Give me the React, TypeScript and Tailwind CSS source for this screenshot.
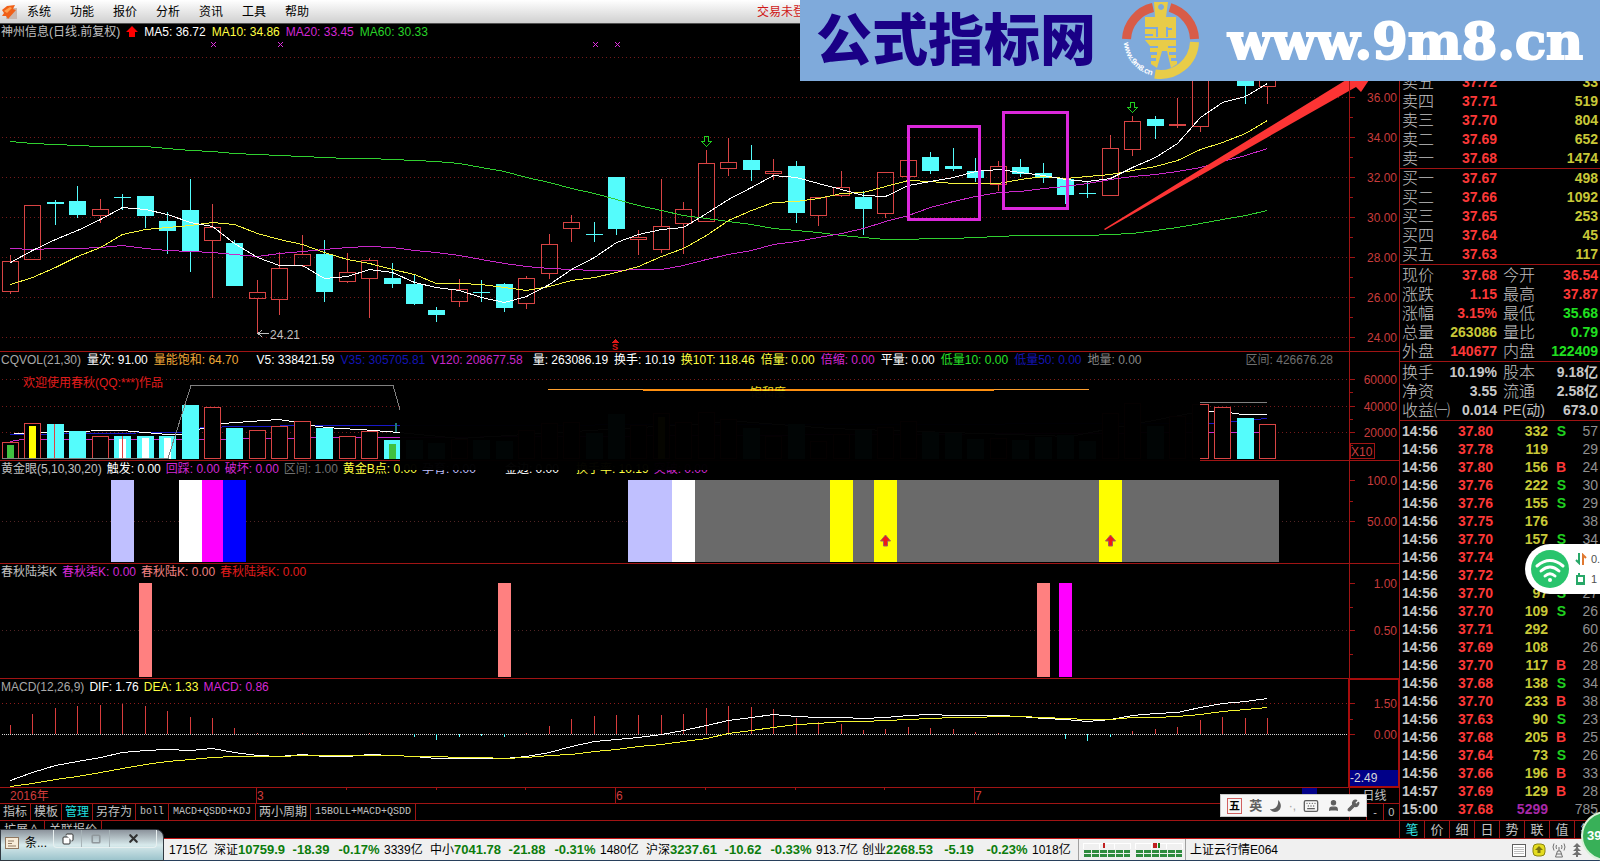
import { Fragment, type ReactNode } from "react"
import { Copy, Keyboard, Moon, Square, User, Wrench, X } from "lucide-react"

const CYAN = "#54fcfc"
const RED = "#d84444"
const LINE = "#a01414"
const W = 1349

// x of the n-th trading day
const dayX = (i: number) => Math.floor(10.5 + i * 22.446) + 0.5

// high, low, body top, body bottom, 1 = up
type Candle = [number, number, number, number, 0 | 1]

const candles: Candle[] = [
  [255, 293, 261, 291, 1], [205, 259, 205, 259, 1], [200, 225, 202, 204, 0], [186, 218, 201, 215, 0],
  [199, 222, 209, 215, 1], [194, 210, 197, 198, 0], [196, 228, 196, 216, 0], [212, 254, 221, 231, 0],
  [179, 272, 210, 251, 0], [204, 297, 227, 240, 1], [240, 286, 243, 286, 0], [280, 333, 292, 298, 1],
  [252, 314, 268, 299, 1], [235, 266, 254, 265, 1], [240, 302, 254, 292, 0], [253, 282, 272, 281, 1],
  [258, 317, 260, 278, 1], [263, 288, 278, 284, 0], [274, 305, 284, 304, 0], [307, 322, 310, 315, 0],
  [279, 306, 289, 301, 1], [280, 302, 292, 293, 0], [283, 312, 284, 308, 0], [276, 308, 278, 303, 1],
  [234, 278, 244, 273, 1], [215, 241, 222, 228, 1], [222, 242, 234, 235, 0], [177, 235, 177, 229, 0],
  [230, 254, 237, 239, 1], [179, 252, 226, 249, 1], [202, 253, 209, 223, 1], [150, 221, 163, 221, 1],
  [138, 175, 162, 168, 1], [145, 181, 160, 170, 0], [159, 179, 171, 173, 1], [161, 223, 166, 213, 0],
  [197, 225, 197, 215, 1], [171, 196, 187, 195, 1], [191, 235, 197, 209, 0], [172, 217, 172, 213, 1],
  [160, 177, 160, 176, 1], [152, 174, 157, 171, 0], [148, 171, 166, 169, 0], [158, 182, 171, 178, 0],
  [161, 190, 166, 184, 1], [159, 177, 167, 174, 0], [163, 183, 173, 178, 0], [179, 204, 179, 195, 0],
  [181, 198, 193, 194, 0], [135, 195, 148, 195, 1], [116, 155, 121, 149, 1], [116, 139, 119, 126, 0],
  [98, 127, 124, 125, 1], [60, 131, 70, 126, 1], [60, 80, 70, 78, 0], [70, 104, 75, 86, 0],
  [50, 103, 60, 86, 1],
]

const ma5 = [
  262, 250, 239, 230, 219, 207, 209, 214, 222, 226, 243, 257, 265, 265, 278, 276, 269, 272, 282, 287,
  290, 297, 302, 296, 284, 269, 257, 242, 234, 229, 227, 213, 199, 187, 175, 177, 183, 189, 195, 196,
  185, 181, 177, 171, 169, 172, 175, 179, 181, 178, 167, 157, 143, 117, 102, 96, 83,
]
const ma10 = [
  284, 277, 267, 256, 247, 234, 229, 227, 225, 222, 224, 233, 239, 244, 252, 259, 263, 269, 274, 283,
  283, 284, 287, 290, 286, 280, 277, 272, 266, 256, 248, 235, 220, 210, 202, 201, 198, 193, 192, 186,
  180, 181, 183, 183, 183, 179, 176, 178, 176, 174, 170, 166, 160, 149, 142, 133, 120,
]
const ma20 = [
  248, 249, 248, 248, 247, 245, 248, 250, 251, 252, 254, 256, 253, 251, 249, 247, 246, 247, 250, 252,
  255, 259, 263, 266, 268, 269, 270, 270, 269, 269, 265, 259, 254, 250, 244, 241, 237, 233, 228, 221,
  215, 207, 201, 196, 192, 191, 188, 186, 183, 179, 176, 174, 171, 167, 161, 155, 148,
]
const ma60 = [
  141, 143, 144, 145, 146, 146, 146, 148, 150, 151, 153, 154, 155, 156, 157, 158, 158, 159, 160, 161,
  163, 167, 171, 177, 182, 188, 193, 199, 205, 210, 215, 218, 221, 224, 228, 230, 232, 235, 237, 239,
  239, 238, 238, 237, 236, 235, 235, 235, 235, 234, 233, 230, 227, 223, 219, 215, 210,
]
const dif = [
  780, 772, 765, 761, 757, 752, 750, 749, 750, 748, 752, 755, 756, 754, 756, 756, 754, 755, 756, 758,
  758, 758, 758, 756, 752, 746, 741, 739, 737, 734, 730, 725, 720, 717, 714, 716, 717, 717, 718, 717,
  715, 714, 715, 715, 715, 716, 718, 719, 721, 719, 715, 713, 712, 707, 703, 701, 698,
]
const dea = [
  786, 783, 779, 776, 772, 768, 764, 761, 759, 757, 756, 756, 756, 755, 755, 755, 755, 755, 756, 756,
  757, 757, 758, 757, 755, 754, 751, 749, 746, 744, 741, 738, 733, 730, 727, 724, 723, 721, 721, 720,
  719, 718, 717, 717, 716, 716, 717, 718, 719, 719, 717, 717, 716, 714, 711, 709, 707,
]
const macd = [
  725, 714, 708, 706, 705, 704, 706, 711, 717, 718, 728, 733, 734, 733, 734, 734, 733, 734, 737, 740,
  737, 736, 737, 733, 726, 719, 716, 715, 715, 715, 714, 708, 706, 707, 709, 718, 722, 724, 730, 729,
  727, 728, 729, 732, 733, 734, 734, 739, 741, 737, 731, 729, 727, 720, 717, 718, 718,
]

// top, 1 = up, optional inner bar colour and top
type VolumeBar = [number, 0 | 1, string?, number?]

const volumes: VolumeBar[] = [
  [442, 1, "#40c040", 445], [423, 1, "#ffff00", 426], [424, 0], [431, 0], [436, 1], [436, 0, "#fff", 439],
  [436, 0, "#fff", 438], [436, 0, "#fff", 438], [405, 0], [407, 1], [428, 0], [430, 1], [426, 1],
  [421, 1], [428, 0], [436, 1], [431, 1], [440, 0, "#40c040", 444], [440, 0], [443, 0], [439, 1],
  [440, 0], [441, 0], [430, 1], [423, 1], [422, 1], [433, 0], [414, 0], [425, 1], [413, 1, "#ffff00", 417],
  [422, 1], [412, 1], [419, 1], [428, 0], [436, 1], [424, 0], [441, 1], [434, 1], [430, 0], [427, 1],
  [421, 1], [432, 0], [433, 0], [439, 0], [438, 1], [440, 0], [437, 0], [435, 0], [441, 0], [413, 1],
  [403, 1], [426, 0], [416, 1], [404, 1], [407, 1], [418, 0], [424, 1],
]

const goldBars: [number, number, string][] = [
  [111, 23, "#c0c0ff"], [179, 23, "#fff"], [202, 21, "#ff00ff"], [223, 23, "#0000ff"],
  [628, 44, "#c0c0ff"], [672, 23, "#fff"], [695, 584, "#6a6a6a"],
  [830, 23, "#ffff00"], [874, 23, "#ffff00"], [1099, 23, "#ffff00"],
]

const points = (ys: number[]) => ys.map((y, i) => `${dayX(i)},${y + 0.5}`).join(" ")

function Curve({ ys, color }: { ys: number[]; color: string }) {
  return <polyline points={points(ys)} fill="none" stroke={color} />
}

function DotRow({ y, color = "#741a1a", dash = "1 3" }: { y: number; color?: string; dash?: string }) {
  return <line x1={2} x2={W} y1={y + 0.5} y2={y + 0.5} stroke={color} strokeDasharray={dash} />
}

interface PanelProps {
  top: number
  height: number
  className: string
  gap?: string
  title: ReactNode
  labels: [number, string][]
  ticks: number[]
  axisClass?: string
  axisExtra?: ReactNode
  children: ReactNode
}

function Panel({
  top, height, className, gap = "gap-[5px]", title, labels, ticks, axisClass = "", axisExtra, children,
}: PanelProps) {
  return (
    <section className={`flex border-b border-[#a01414] ${className}`}>
      <div className="grid min-w-0 flex-1">
        <div className={`col-start-1 row-start-1 flex h-4 items-center overflow-hidden pl-px whitespace-nowrap ${gap}`}>
          {title}
        </div>
        <svg
          className="col-start-1 row-start-1 h-full w-full overflow-visible"
          viewBox={`0 ${top} ${W} ${height}`}
          preserveAspectRatio="none"
          shapeRendering="crispEdges"
        >
          {children}
        </svg>
      </div>
      <div className={`w-[50px] border-l border-[#a01414] ${axisClass}`}>
        <svg className="block h-full w-full" viewBox={`0 ${top} 49 ${height}`} shapeRendering="crispEdges">
          {ticks.map((y, i) => (
            <line key={y} x1={0} x2={i % 2 ? 3 : 5} y1={y + 0.5} y2={y + 0.5} stroke={LINE} />
          ))}
          {labels.map(([y, text]) => (
            <text key={y} x={47} y={y + 5} textAnchor="end" fontSize={12} fill="#c83c3c">
              {text}
            </text>
          ))}
          {axisExtra}
        </svg>
      </div>
    </section>
  )
}

function DownArrow({ x, y }: { x: number; y: number }) {
  return (
    <path
      d={`M${x - 2} ${y}h4v5h3l-5 5l-5-5h3z`}
      fill="none"
      stroke="#20d020"
    />
  )
}

function PricePanel() {
  return (
    <Panel
      top={24}
      height={327}
      className="h-[328px]"
      gap="gap-1.5"
      title={
        <>
          <span className="text-[#c0c0c0]">神州信息(日线.前复权)</span>
          <svg className="h-3 w-3" viewBox="0 0 12 12">
            <path d="M6 0l6 6H9v5H3V6H0z" fill="#ff0000" />
          </svg>
          <span className="text-white">MA5: 36.72</span>
          <span className="text-[#ffff40]">MA10: 34.86</span>
          <span className="text-[#d428d4]">MA20: 33.45</span>
          <span className="text-[#28d428]">MA60: 30.33</span>
        </>
      }
      ticks={[57, 77, 97, 117, 137, 157, 177, 197, 217, 237, 257, 277, 297, 317, 337]}
      labels={[
        [97, "36.00"],
        [137, "34.00"],
        [177, "32.00"],
        [217, "30.00"],
        [257, "28.00"],
        [297, "26.00"],
        [337, "24.00"],
      ]}
    >
      {[57, 97, 137, 177, 217, 257, 297, 337].map((y) => (
        <DotRow key={y} y={y} />
      ))}
      {candles.map(([high, low, top, bottom, up], i) => {
        const x = dayX(i)
        return up ? (
          <g key={i} stroke={RED} fill="none">
            <path d={`M${x} ${high}V${top}M${x} ${bottom + 1}V${low + 1}`} />
            <rect x={x - 8} y={top + 0.5} width={16} height={bottom - top} />
          </g>
        ) : (
          <g key={i} fill={CYAN}>
            <rect x={x - 0.5} y={high} width={1} height={low - high} />
            <rect x={x - 8.5} y={top} width={17} height={bottom - top} />
          </g>
        )
      })}
      <Curve ys={ma60} color="#30d030" />
      <Curve ys={ma20} color="#c828c8" />
      <Curve ys={ma10} color="#f4f440" />
      <Curve ys={ma5} color="#ffffff" />
      <DownArrow x={706.5} y={136.5} />
      <DownArrow x={1132.5} y={102.5} />
      {[213, 280, 595, 617].map((x) => (
        <path key={x} d={`M${x - 2} 42l5 5M${x + 3} 42l-5 5`} stroke="#e030e0" />
      ))}
      <path d="M269 333.5h-11M262 330l-4 3.5l4 3.5" fill="none" stroke="#c0c0c0" />
      <text x={270} y={339} fontSize={12} fill="#c0c0c0">24.21</text>
      <path d="M615 339l4 4h-8z" fill="#e01818" />
      <text x={612} y={350} fontSize={9} fontWeight={700} fill="#e01818">S</text>
      <g fill="none" stroke="#dc28dc" strokeWidth={3}>
        <rect x={908.5} y={126.5} width={71} height={93} />
        <rect x={1003.5} y={112.5} width={64} height={96} />
      </g>
      <path
        d="M1104 229L1180 182L1346 80L1369 80L1361 92L1356 87L1180 187L1105 230z"
        fill="#fc3434"
        shapeRendering="auto"
      />
    </Panel>
  )
}

function VolumePanel() {
  return (
    <Panel
      top={352}
      height={108}
      className="h-[109px]"
      gap="gap-1.5"
      title={
        <>
          <span className="text-[#a8a8a8]">CQVOL(21,30)</span>
          <span className="text-white">量次: 91.00</span>
          <span className="text-[#f0a838]">量能饱和: 64.70</span>
          <span className="ml-3 text-white">V5: 338421.59</span>
          <span className="text-[#1414b4]">V35: 305705.81</span>
          <span className="text-[#c828c8]">V120: 208677.58</span>
          <span className="ml-1 text-white">量: 263086.19</span>
          <span className="text-white">换手: 10.19</span>
          <span className="text-[#ffff40]">换10T: 118.46</span>
          <span className="text-[#ffff40]">倍量: 0.00</span>
          <span className="text-[#d428d4]">倍缩: 0.00</span>
          <span className="text-white">平量: 0.00</span>
          <span className="text-[#28e028]">低量10: 0.00</span>
          <span className="text-[#1414b4]">低量50: 0.00</span>
          <span className="text-[#888888]">地量: 0.00</span>
          <span className="mr-4 ml-auto text-[#707070]">区间: 426676.28</span>
        </>
      }
      ticks={[379, 392, 406, 419, 432, 445]}
      labels={[
        [379, "60000"],
        [406, "40000"],
        [432, "20000"],
      ]}
      axisExtra={
        <>
          <rect x={0.5} y={443.5} width={24} height={15} fill="none" stroke={LINE} />
          <text x={1} y={456} fontSize={12} fill="#c83c3c">X10</text>
        </>
      }
    >
      <DotRow y={379} />
      <DotRow y={406} />
      <DotRow y={432} />
      <text x={23} y={387} fontSize={12} fill="#e01c1c">欢迎使用春秋(QQ:***)作品</text>
      <g fill="none">
        <path d="M10 434.5L180 432.5L202 427.5L243 426.5L317 425.5H395L1209 423.5L1245 420.5L1267 418.5" stroke="#1818c8" />
        <path d="M10 441.5L22 439.5H200L337 437.5H400L1209 432.5H1267" stroke="#c828c8" />
        <path d="M14 433.5L60 431.5L122 430.5L168 434.5L186 434.5L200 429L222 423.5L278 419.5L293 421.5L317 426.5L340 428.5L360 429.5L399 432.5L460 438.5L590 430.5L740 421.5L830 428.5L1070 436.5L1200 411.5H1222L1242 414.5H1267" stroke="#ffffff" />
      </g>
      {volumes.map(([top, up, inner, innerTop], i) => {
        const x = dayX(i)
        return (
          <Fragment key={i}>
            <rect
              x={up ? x - 8 : x - 8.5}
              y={up ? top + 0.5 : top}
              width={up ? 16 : 17}
              height={(up ? 458 : 459) - top}
              fill={up ? "#000" : CYAN}
              stroke={up ? RED : "none"}
            />
            {inner && <rect x={x - 3.5} y={innerTop} width={7} height={459 - (innerTop ?? 0)} fill={inner} />}
          </Fragment>
        )
      })}
      <path d="M54.5 424V459M122.5 436V459" stroke="#e04040" />
      <path d="M2 458.5H168L191 385.5H393L400 409.5M1200 402.5H1267" fill="none" stroke="#808080" />
      <path d="M395.5 423V432" stroke="#207878" strokeWidth={2} />
      <path d="M548 389.5H1089" stroke="#ffa030" />
      <path d="M643 390H994" stroke="#ff9010" strokeWidth={2} />
      <text x={750} y={397} fontSize={12} fill="#f4e020">饱和度</text>
    </Panel>
  )
}

function GoldPanel() {
  return (
    <Panel
      top={461}
      height={102}
      className="h-[103px]"
      title={
        <>
          <span className="text-[#c0c0c0]">黄金眼(5,10,30,20)</span>
          <span className="text-white">触发: 0.00</span>
          <span className="text-[#d428d4]">回踩: 0.00</span>
          <span className="text-[#d428d4]">破坏: 0.00</span>
          <span className="text-[#707070]">区间: 1.00</span>
          <span className="text-[#ffff40]">黄金B点: 0.00</span>
          <span className="text-[#c0c0ff]">孕育: 0.00</span>
          <span className="ml-6 text-white">金边: 0.00</span>
          <span className="ml-3 text-[#ffff40]">换手率: 10.19</span>
          <span className="text-[#d428d4]">突破: 0.00</span>
        </>
      }
      ticks={[480, 501, 521]}
      labels={[
        [480, "100.0"],
        [521, "50.00"],
      ]}
    >
      <DotRow y={521} color="#502424" />
      {goldBars.map(([x, width, fill]) => (
        <rect key={x} x={x} y={480} width={width} height={82} fill={fill} />
      ))}
      {[885.5, 1110.5].map((x) => (
        <path
          key={x}
          d={`M${x} 535l5 6h-3v5h-4v-5h-3z`}
          fill="#f01818"
          stroke="#a06060"
          shapeRendering="auto"
        />
      ))}
    </Panel>
  )
}

function SignalPanel() {
  return (
    <Panel
      top={564}
      height={114}
      className="h-[115px]"
      title={
        <>
          <span className="text-[#c0c0c0]">春秋陆柒K</span>
          <span className="text-[#d428d4]">春秋柒K: 0.00</span>
          <span className="text-[#f08080]">春秋陆K: 0.00</span>
          <span className="text-[#e01c1c]">春秋陆柒K: 0.00</span>
        </>
      }
      ticks={[583, 607, 630, 654]}
      labels={[
        [583, "1.00"],
        [630, "0.50"],
      ]}
    >
      <DotRow y={630} color="#502424" />
      <g fill="#ff8080">
        <rect x={139} y={583} width={13} height={94} />
        <rect x={498} y={583} width={13} height={94} />
        <rect x={1037} y={583} width={13} height={94} />
      </g>
      <rect x={1059} y={583} width={13} height={94} fill="#ff00ff" />
    </Panel>
  )
}

function MacdPanel() {
  return (
    <Panel
      top={679}
      height={108}
      className="h-[109px]"
      axisClass="outline-2 -outline-offset-1 outline-[#a80c0c]"
      title={
        <>
          <span className="text-[#a8a8a8]">MACD(12,26,9)</span>
          <span className="text-white">DIF: 1.76</span>
          <span className="text-[#ffff40]">DEA: 1.33</span>
          <span className="text-[#d428d4]">MACD: 0.86</span>
        </>
      }
      ticks={[703, 719, 734]}
      labels={[
        [703, "1.50"],
        [734, "0.00"],
      ]}
      axisExtra={
        <>
          <rect x={0} y={770} width={48} height={16} fill="#000088" />
          <text x={0} y={782} fontSize={12} fill="#d8d8d8">-2.49</text>
        </>
      }
    >
      <DotRow y={703} color="#8c1c1c" />
      <DotRow y={734} color="#d8d8d8" dash="1 1" />
      {macd.map((y, i) => (
        <line key={i} x1={dayX(i)} x2={dayX(i)} y1={734} y2={y} stroke={y > 734 ? CYAN : "#d83c3c"} />
      ))}
      <Curve ys={dif} color="#ffffff" />
      <Curve ys={dea} color="#f4f430" />
    </Panel>
  )
}

const templates = ["指标", "模板", "管理", "另存为", "boll", "MACD+QSDD+KDJ", "两小周期", "15BOLL+MACD+QSDD"]

function ChartFooter() {
  return (
    <>
      <div className="flex h-4 border-b border-[#a01414]">
        <svg className="h-full min-w-0 flex-1" viewBox={`0 788 ${W} 15`} preserveAspectRatio="none" shapeRendering="crispEdges">
          <path
            d="M256.5 788V803M615.5 788V803M974.5 788V803M346.5 788v2M436.5 788v2M525.5 788v2M705.5 788v2M795.5 788v2M884.5 788v2"
            stroke={LINE}
          />
          <g fontSize={12} fill="#d03c3c">
            <text x={10} y={800}>2016年</text>
            <text x={257} y={800}>3</text>
            <text x={616} y={800}>6</text>
            <text x={975} y={800}>7</text>
          </g>
          <rect x={1302} y={788} width={15} height={8} fill="#000088" />
        </svg>
        <div className="w-[50px] border-l border-[#a01414] text-center leading-4 text-[#c0c0c0]">日线</div>
      </div>
      <div className="flex h-[17px] border-b border-[#a01414]">
        <div className="flex flex-1">
          {templates.map((name) => (
            <button
              key={name}
              className={`border-r border-[#a01414] leading-4 ${
                name === "管理" ? "text-[#20e0e0]" : "text-[#c0c0c0]"
              } ${/^[\x00-\x7f]+$/.test(name) ? "px-1 font-[Liberation_Mono,monospace] text-[10px]" : "px-[3px]"}`}
            >
              {name}
            </button>
          ))}
        </div>
        <div className="grid w-[50px] grid-cols-3 border-l border-[#a01414] text-center text-[11px] leading-4 text-[#c0c0c0]">
          <button>+</button>
          <button className="border-l border-[#a01414]">-</button>
          <button className="border-l border-[#a01414]">0</button>
        </div>
      </div>
      <div className="flex h-[18px] border-b border-[#c01414] text-[#c0c0c0]">
        <button className="border-r border-[#a01414] px-1 leading-4">扩展∧</button>
        <button className="border-r border-[#a01414] px-1 leading-4">关联报价</button>
      </div>
    </>
  )
}

const asks = [
  ["卖五", "37.72", "33"],
  ["卖四", "37.71", "519"],
  ["卖三", "37.70", "804"],
  ["卖二", "37.69", "652"],
  ["卖一", "37.68", "1474"],
]
const bids = [
  ["买一", "37.67", "498"],
  ["买二", "37.66", "1092"],
  ["买三", "37.65", "253"],
  ["买四", "37.64", "45"],
  ["买五", "37.63", "117"],
]

const R = "text-[#fc3838]"
const G = "text-[#20e020]"
const Y = "text-[#c8c838]"
const N = "text-[#c8c8c8]"

const quotes = [
  ["现价", "37.68", R, "今开", "36.54", R],
  ["涨跌", "1.15", R, "最高", "37.87", R],
  ["涨幅", "3.15%", R, "最低", "35.68", G],
  ["总量", "263086", Y, "量比", "0.79", G],
  ["外盘", "140677", R, "内盘", "122409", G],
]
const basics = [
  ["换手", "10.19%", N, "股本", "9.18亿", N],
  ["净资", "3.55", N, "流通", "2.58亿", N],
  ["收益㈠", "0.014", N, "PE(动)", "673.0", N],
]

const trades = [
  ["14:56", "37.80", "332", "S", "57"],
  ["14:56", "37.78", "119", "", "29"],
  ["14:56", "37.80", "156", "B", "24"],
  ["14:56", "37.76", "222", "S", "30"],
  ["14:56", "37.76", "155", "S", "29"],
  ["14:56", "37.75", "176", "", "38"],
  ["14:56", "37.70", "157", "S", "34"],
  ["14:56", "37.74", "", "", ""],
  ["14:56", "37.72", "", "", ""],
  ["14:56", "37.70", "97", "S", "27"],
  ["14:56", "37.70", "109", "S", "26"],
  ["14:56", "37.71", "292", "", "60"],
  ["14:56", "37.69", "108", "", "26"],
  ["14:56", "37.70", "117", "B", "28"],
  ["14:56", "37.68", "138", "S", "34"],
  ["14:56", "37.70", "233", "B", "38"],
  ["14:56", "37.63", "90", "S", "23"],
  ["14:56", "37.68", "205", "B", "25"],
  ["14:56", "37.64", "73", "S", "26"],
  ["14:56", "37.66", "196", "B", "33"],
  ["14:57", "37.69", "129", "B", "28"],
  ["15:00", "37.68", "5299", "", "785"],
]

function DepthTable({ rows }: { rows: string[][] }) {
  return (
    <table className="w-full table-fixed border-separate border-spacing-0 border-b border-[#a01414]">
      <tbody>
        {rows.map(([label, price, count]) => (
          <tr key={label} className="h-[19px] leading-[19px]">
            <th className="w-[40px] p-0 pl-0.5 text-left text-base leading-[19px] font-light text-[#c0c0c0]">{label}</th>
            <td className="w-[57px] p-0 text-right text-sm leading-[19px] font-bold text-[#fc3838]">{price}</td>
            <td className="p-0 pr-0.5 text-right text-sm leading-[19px] font-bold text-[#c8c838]">{count}</td>
          </tr>
        ))}
      </tbody>
    </table>
  )
}

function QuoteTable({ rows }: { rows: string[][] }) {
  return (
    <table className="w-full table-fixed border-separate border-spacing-0 border-b border-[#a01414] pt-px whitespace-nowrap">
      <tbody>
        {rows.map(([a, av, ac, b, bv, bc]) => (
          <tr key={a} className="h-[19px]">
            <th className="w-[40px] p-0 pl-0.5 text-left text-base leading-[19px] font-light text-[#c0c0c0]">{a}</th>
            <td className={`w-[57px] p-0 text-right text-sm leading-[19px] font-bold ${ac}`}>{av}</td>
            <th
              className={`w-[44px] p-0 pl-1.5 text-left leading-[19px] text-[#c0c0c0] ${
                b.startsWith("PE") ? "text-sm font-normal" : "text-base font-light"
              }`}
            >
              {b}
            </th>
            <td className={`p-0 pr-0.5 text-right text-sm leading-[19px] font-bold ${bc}`}>{bv}</td>
          </tr>
        ))}
      </tbody>
    </table>
  )
}

function QuoteSidebar() {
  return (
    <aside className="flex w-[201px] shrink-0 flex-col border-l border-[#a01414]">
      <div className="h-[49px]" />
      <DepthTable rows={asks} />
      <DepthTable rows={bids} />
      <QuoteTable rows={quotes} />
      <QuoteTable rows={basics} />
      <table className="mt-px w-full table-fixed text-sm font-bold">
        <tbody>
          {trades.map(([time, price, count, side, deals], i) => (
            <tr key={i} className="h-[18px] leading-[18px]">
              <td className="w-[42px] p-0 pl-0.5 text-[#c8c8c8]">{time}</td>
              <td className="w-[51px] p-0 text-right text-[#fc3838]">{price}</td>
              <td className={`w-[55px] p-0 text-right ${count === "5299" ? "text-[#a828a8]" : "text-[#c8c838]"}`}>
                {count}
              </td>
              <td className={`w-[18px] p-0 text-right ${side === "B" ? "text-[#fc3838]" : "text-[#20d020]"}`}>{side}</td>
              <td className="p-0 pr-0.5 text-right font-normal text-[#909090]">{deals}</td>
            </tr>
          ))}
        </tbody>
      </table>
      <nav className="mt-auto flex h-[19px] overflow-hidden border-y border-[#a01414]">
        {["笔", "价", "细", "日", "势", "联", "值", "筹"].map((tab, i) => (
          <button
            key={tab}
            className={`w-[25px] shrink-0 border-r border-[#a01414] text-[13px] leading-4 ${
              i === 0 ? "text-[#30e0e0]" : "text-[#c0c0c0]"
            }`}
          >
            {tab}
          </button>
        ))}
      </nav>
    </aside>
  )
}

const indices = [
  ["深证", "10759.9", "-18.39", "-0.17%", "3339亿"],
  ["中小", "7041.78", "-21.88", "-0.31%", "1480亿"],
  ["沪深", "3237.61", "-10.62", "-0.33%", "913.7亿"],
  ["创业", "2268.53", "-5.19", "-0.23%", "1018亿"],
]

function Meter({ marks }: { marks: [number, string][] }) {
  return (
    <svg className="h-[18px] w-12" viewBox="0 0 48 18" shapeRendering="crispEdges">
      <path d="M0 2.5H47M0.5 2V8M16.5 2V8M31.5 2V8M47.5 2V8" stroke="#fff" />
      {marks.map(([x, fill]) => (
        <rect key={x} x={x} y={2} width={2} height={5} fill={fill} />
      ))}
      <path d="M1 10.5H47M1 14.5H47" stroke="#2e8b3e" strokeWidth={3} strokeDasharray="7 1" />
    </svg>
  )
}

function StatusBar() {
  return (
    <footer className="flex h-[22px] items-center border-b border-[#28405c] bg-[#f0f0f0] pl-[169px] text-black">
      <span className="w-[45px]">1715亿</span>
      {indices.map(([name, price, change, percent, amount]) => (
        <div key={name} className="flex w-[216px] items-center whitespace-nowrap">
          <span>{name}</span>
          <b className="w-[50px] text-[13px] text-[#0c7c0c]">{price}</b>
          <b className="w-[46px] text-center text-[13px] text-[#0c7c0c]">{change}</b>
          <b className="w-[50px] text-center text-[13px] text-[#0c7c0c]">{percent}</b>
          <span>{amount}</span>
        </div>
      ))}
      <div className="flex h-full items-center gap-1 border-x border-[#a0a0a0] pr-0.5 pl-1">
        <Meter marks={[[20, "#c02020"]]} />
        <Meter marks={[[18, "#c02020"], [20, "#c02020"], [23, "#208020"]]} />
      </div>
      <span className="pl-1">上证云行情E064</span>
      <div className="mr-[18px] ml-auto flex items-center gap-1.5">
        <svg className="h-[14px] w-[14px]" viewBox="0 0 14 14" shapeRendering="crispEdges">
          <rect x="0.5" y="1.5" width="13" height="12" fill="#fff" stroke="#606060" />
          <path d="M2 4.5h10M2 6.5h10M2 8.5h10M2 10.5h10" stroke="#c0c0c0" />
        </svg>
        <svg className="h-[14px] w-[14px]" viewBox="0 0 14 14">
          <rect x="1" y="1" width="12" height="12" rx="4" fill="#e4dc20" stroke="#8a8410" />
          <path d="M7 3l4 4H8.500v3h-3V7H3z" fill="#7a7410" />
        </svg>
        <svg className="h-4 w-[14px]" viewBox="0 0 14 16" fill="none" stroke="#707070">
          <path d="M7 5v4M5.500 9h3l2 6h-7zM4.500 12h5M4.500 3q-1 2 0 4M2 1.500q-2 3.500 0 7M9.500 3q1 2 0 4M12 1.500q2 3.500 0 7" />
        </svg>
        <svg className="h-[14px] w-[10px]" viewBox="0 0 10 14" fill="#707070">
          <path d="M5 0l4 4H6v1l3 3H6v1l4 3H6v2H4v-2H0l4-3V8H1l3-3V4H1z" />
        </svg>
      </div>
    </footer>
  )
}

function MenuBar() {
  return (
    <header className="flex h-6 items-center border-b border-[#505050] bg-linear-to-b from-white to-[#d0d0d0] text-black">
      <svg className="mr-[10px] ml-px h-4 w-4" viewBox="0 0 16 16">
        <rect x="5" y="4" width="11" height="11" fill="#c8b8b0" />
        <path d="M1 6L6 2L14 1L12 5L15 6L7 15L5 12L1 12L3 9z" fill="#f06018" />
        <path d="M3 7l6-4l2 1l-5 5z" fill="#ffa050" />
      </svg>
      <nav className="flex flex-1 gap-[19px]">
        {["系统", "功能", "报价", "分析", "资讯", "工具", "帮助"].map((item) => (
          <button key={item}>{item}</button>
        ))}
      </nav>
      <span className="w-[843px] text-[#d01818]">交易未登录</span>
    </header>
  )
}

function Banner() {
  return (
    <div className="absolute top-0 right-0 flex h-[81px] w-1/2 items-center overflow-hidden bg-[#7faadb] whitespace-nowrap">
      <span className="w-[320px] pl-4 text-[56px] leading-[76px] font-black text-[#1a0086]">公式指标网</span>
      <svg className="h-[81px] w-20 shrink-0" viewBox="1120 0 80 81">
        <g fill="none" strokeWidth={9}>
          <path d="M1126.500 39A34 34 0 0 1 1153 7.500M1170 7.500A34 34 0 0 1 1194.500 39" stroke="#d85c48" />
          <path d="M1194.500 42A34 34 0 0 1 1155 74" stroke="#e8cc48" />
          <path id="site" d="M1122 43A38 38 0 0 0 1156 78" stroke="none" />
        </g>
        <text fontSize={8} fontWeight={700} fill="#fff" dy={-2}>
          <textPath href="#site">www.9m8.cn</textPath>
        </text>
        <path
          fillRule="evenodd"
          fill="#e8cc48"
          d="M1154 2h14l-2 15h10v21h-31V17h10zM1161 4a3 3 0 1 0 .1 0zM1145 40h31v6h-8v2h8v4h-7v3h7v3h-5v3h6v3l-6 4l-4-17h-5l-5 17l-6-4v-3h5v-3h-5v-3h6v-3h-7v-4h8v-2h-8z"
        />
        <path d="M1145 28h12v3M1167 27v10M1157 28v9M1145 35h8M1167 29h5" fill="none" stroke="#7faadb" strokeWidth={2} />
      </svg>
      <span className="pl-7 font-[DejaVu_Serif,serif] text-[51px] leading-[72px] font-bold text-white [-webkit-text-stroke:2px_white]">
        www.9m8.cn
      </span>
    </div>
  )
}

function ImeBar() {
  return (
    <div className="absolute right-[233px] bottom-[44px] flex h-[23px] w-[147px] items-center justify-between border border-[#c8c8c8] bg-[#f6f6f6] px-1.5 text-[#606060]">
      <span className="border border-[#d06060] px-px text-[11px] leading-[14px] font-bold text-black">五</span>
      <span className="text-[13px] font-bold">英</span>
      <svg className="h-3 w-3" viewBox="0 0 12 12" fill="#606060">
        <path d="M8 0C13 4 11 12 5 12C3 12 1 11 0 9C5 10 9 6 8 0z" />
      </svg>
      <span className="text-[#a0a0a0]">·,</span>
      <Keyboard size={16} />
      <User size={13} fill="#606060" />
      <Wrench size={13} fill="#606060" />
    </div>
  )
}

function NetWidget() {
  return (
    <div className="absolute top-[544px] right-0 flex h-[50px] w-[75px] items-center overflow-hidden rounded-l-full bg-white pl-1.5">
      <svg className="h-[38px] w-[38px] shrink-0" viewBox="0 0 38 38">
        <circle cx="19" cy="19" r="19" fill="#28c46c" />
        <g fill="none" stroke="#fff" strokeWidth="3" strokeLinecap="round">
          <path d="M6 16Q19 5 32 16M10 21Q19 13 28 21M14 26Q19 21.500 24 26" />
        </g>
        <circle cx="19" cy="30" r="2" fill="#fff" />
      </svg>
      <div className="ml-1.5 grid grid-cols-[12px_auto] items-center gap-x-1 gap-y-1 text-[11px] leading-4 text-[#505050]">
        <svg className="h-3 w-3" viewBox="0 0 12 12" fill="none" strokeWidth="2">
          <path d="M4 0V10L1 7" stroke="#28a868" />
          <path d="M8 12V2L11 5" stroke="#e07830" />
        </svg>
        <span>0.</span>
        <svg className="h-3 w-3" viewBox="0 0 12 12" fill="none" stroke="#28a868" strokeWidth="2">
          <path d="M2 3h7v8H2zM4 0v3M2 10h7" />
        </svg>
        <span>1</span>
      </div>
    </div>
  )
}

function MiniWindow() {
  return (
    <div className="absolute bottom-0 left-0 flex h-8 w-[164px] items-start rounded-tr-lg border border-[#303840] bg-linear-to-b from-[#8c949c] via-[#d8eaec] to-[#9cc4cc] text-black">
      <div className="flex h-full items-center gap-1.5 pb-1 pl-1">
        <svg className="h-3 w-[14px]" viewBox="0 0 14 12">
          <rect x="0.5" y="0.5" width="13" height="11" fill="#f8ecd8" stroke="#907860" />
          <path d="M3 4h6M3 6.500h4M3 9h8" stroke="#907860" />
        </svg>
        <span>条...</span>
      </div>
      <div className="mr-1.5 ml-auto flex h-[18px] rounded-b border border-t-0 border-[#e8f0f0] text-[#303030]">
        <button aria-label="还原" className="flex w-7 items-center justify-center border-r border-[#a8b4b8]">
          <Copy size={12} fill="#fff" className="-scale-x-100" />
        </button>
        <button aria-label="最大化" className="flex w-7 items-center justify-center border-r border-[#a8b4b8] text-[#90989c]">
          <Square size={10} strokeWidth={4} />
        </button>
        <button aria-label="关闭" className="flex w-[46px] items-center justify-center"><X size={13} strokeWidth={4} /></button>
      </div>
    </div>
  )
}

export default function App() {
  return (
    <div className="relative flex min-h-screen flex-col overflow-hidden bg-black font-[Liberation_Sans,Noto_Sans_CJK_SC,sans-serif] text-xs leading-4">
      <MenuBar />
      <div className="flex flex-1">
        <main className="min-w-0 flex-1">
          <PricePanel />
          <VolumePanel />
          <GoldPanel />
          <SignalPanel />
          <MacdPanel />
          <ChartFooter />
        </main>
        <QuoteSidebar />
      </div>
      <StatusBar />
      <div className="absolute top-[391px] left-1/4 h-[79px] w-1/2 bg-black/98" />
      <Banner />
      <NetWidget />
      <ImeBar />
      <MiniWindow />
      <div className="absolute right-[-31px] bottom-0 h-[50px] w-[50px] rounded-full border-2 border-[#d8f0d8] bg-[#38b058] pl-1 text-[13px] leading-[46px] font-bold text-white">
        39
      </div>
    </div>
  )
}
